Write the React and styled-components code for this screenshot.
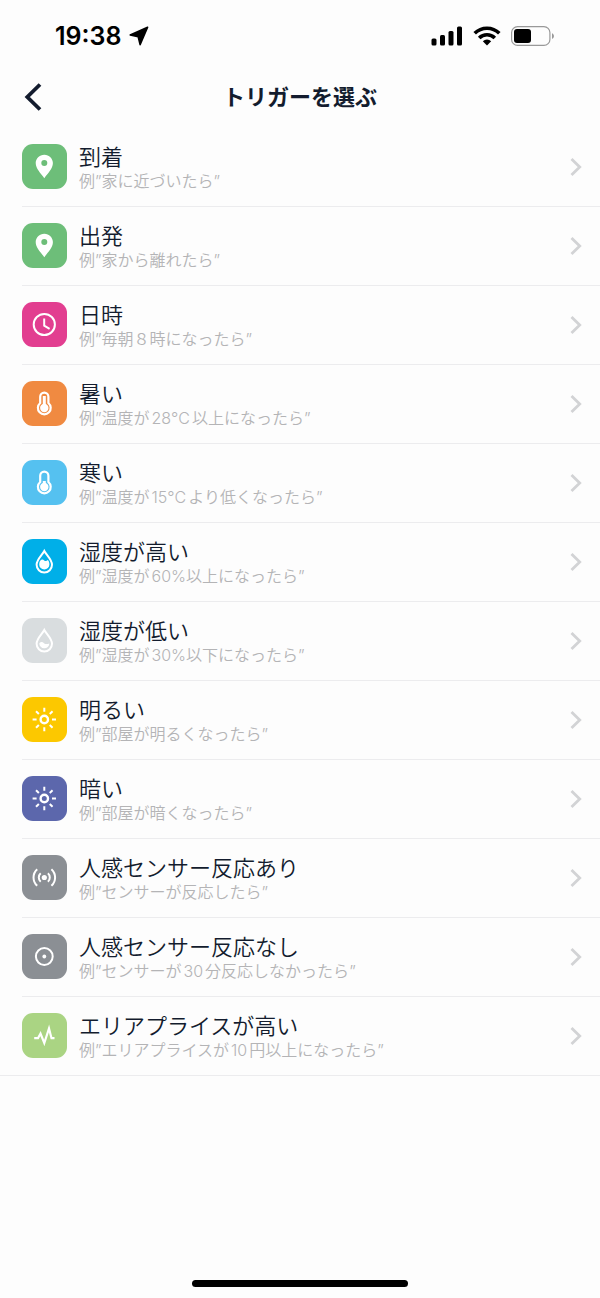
import React from "react";
import styled, { createGlobalStyle } from "styled-components";

const PinIcon = () => (
  <path
    fill="#fff"
    stroke="none"
    fillRule="evenodd"
    d="M22.3 10.7c-4.9 0-8.6 3.8-8.6 8.4 0 5.6 5 10.3 8.6 15.1 3.6-4.8 8.6-9.5 8.6-15.1 0-4.6-3.7-8.4-8.6-8.4zm0 5.4a3 3 0 1 1 0 6 3 3 0 0 1 0-6z"
  />
);

const ClockIcon = () => (
  <>
    <circle cx="22.3" cy="22.5" r="10.6" />
    <path d="M22.2 16.5V23.7L27.6 26.8" />
  </>
);

const ThermometerIcon = ({ level }) => (
  <>
    <path d="M18.2 22V15.8a4.1 4.1 0 0 1 8.2 0V22a6.4 6.4 0 1 1-8.2 0z" strokeWidth="2.2" />
    <circle cx="22.3" cy="27" r="4.2" fill="#fff" stroke="none" />
    <path d={`M22.3 ${level}V26`} strokeWidth="3" />
  </>
);

const DropIcon = ({ water }) => (
  <>
    <path d="M22.3 12C20.4 15.8 14.6 20.6 14.6 25.8a7.7 7.7 0 0 0 15.4 0C30 20.6 24.2 15.8 22.3 12z" />
    <path d={water} fill="#fff" stroke="none" />
  </>
);

const SunIcon = () => (
  <>
    <circle cx="22.3" cy="22.5" r="3.7" strokeWidth="2.4" />
    {[0, 45, 90, 135, 180, 225, 270, 315].map((angle) => (
      <path
        key={angle}
        d="M22.3 10.8V14.8"
        transform={`rotate(${angle} 22.3 22.5)`}
      />
    ))}
  </>
);

const MotionIcon = () => (
  <>
    <circle cx="22.3" cy="22.5" r="2.6" fill="#fff" stroke="none" />
    <path d="M18.7 18.2a5.8 5.8 0 0 0 0 8.6M25.9 18.2a5.8 5.8 0 0 1 0 8.6" />
    <path d="M15.2 14.2a11.2 11.2 0 0 0 0 16.6M29.4 14.2a11.2 11.2 0 0 1 0 16.6" />
  </>
);

const NoMotionIcon = () => (
  <>
    <circle cx="22.3" cy="22.5" r="8.4" />
    <circle cx="22.3" cy="22.5" r="1.9" fill="#fff" stroke="none" />
  </>
);

const PriceIcon = () => (
  <path
    d="M12.2 25.2H16L18.5 20.5L22.3 30L27 15.5L29.5 25.2H32.5"
    strokeWidth="2.2"
  />
);

const triggers = [
  { title: "到着", example: "家に近づいたら", color: "#6dbe79", icon: <PinIcon /> },
  { title: "出発", example: "家から離れたら", color: "#6dbe79", icon: <PinIcon /> },
  { title: "日時", example: "毎朝８時になったら", color: "#e23e90", icon: <ClockIcon /> },
  {
    title: "暑い",
    example: "温度が28°C以上になったら",
    color: "#f08a41",
    icon: <ThermometerIcon level={15} />,
  },
  {
    title: "寒い",
    example: "温度が15°Cより低くなったら",
    color: "#55c1f0",
    icon: <ThermometerIcon level={21} />,
  },
  {
    title: "湿度が高い",
    example: "湿度が60%以上になったら",
    color: "#00afe8",
    icon: (
      <DropIcon water="M18.4 21.6c1.3-1.6 2.7-1.2 3.8-.2s2.3.9 3.7-.3c1 1.2 1.5 2.9 1.5 4.4a5.1 5.1 0 0 1-10.2 0c0-1.3.4-2.9 1.2-3.9z" />
    ),
  },
  {
    title: "湿度が低い",
    example: "湿度が30%以下になったら",
    color: "#d9dddf",
    icon: (
      <DropIcon water="M17.3 25.2c1.7-1.7 3.4-1.2 4.7 0s3 1.1 5.3.2a5 5 0 0 1-10-.2z" />
    ),
  },
  { title: "明るい", example: "部屋が明るくなったら", color: "#fcc800", icon: <SunIcon /> },
  { title: "暗い", example: "部屋が暗くなったら", color: "#5c67ac", icon: <SunIcon /> },
  {
    title: "人感センサー反応あり",
    example: "センサーが反応したら",
    color: "#8b8f94",
    icon: <MotionIcon />,
  },
  {
    title: "人感センサー反応なし",
    example: "センサーが30分反応しなかったら",
    color: "#8b8f94",
    icon: <NoMotionIcon />,
  },
  {
    title: "エリアプライスが高い",
    example: "エリアプライスが10円以上になったら",
    color: "#aad483",
    icon: <PriceIcon />,
  },
];

export default function App() {
  return (
    <>
      <GlobalStyle />
      <Screen>
        <StatusBar>
          <StatusGroup $gap={8}>
            <Time>19:38</Time>
            <svg width="20" height="20" viewBox="0 0 20 20" aria-hidden="true">
              <path
                d="M18.6 1.2 1.2 8.9 9.2 10.8 11.1 18.6z"
                fill="#000"
                stroke="#000"
                strokeWidth="1.6"
                strokeLinejoin="round"
              />
            </svg>
          </StatusGroup>
          <StatusGroup $gap={10}>
            <svg width="32" height="20" viewBox="0 0 32 20" aria-hidden="true">
              <rect x="0.5" y="12.5" width="5" height="7" rx="1.5" />
              <rect x="9" y="9" width="5" height="10.5" rx="1.5" />
              <rect x="17.5" y="5" width="5" height="14.5" rx="1.5" />
              <rect x="26" y="0.5" width="5" height="19" rx="1.5" />
            </svg>
            <svg width="28" height="20" viewBox="0 0 28 20" aria-hidden="true">
              <g fill="none" stroke="#000" strokeWidth="3.6">
                <path d="M1.7 7.3a17.4 17.4 0 0 1 24.6 0" />
                <path d="M6.2 12a11 11 0 0 1 15.6 0" />
              </g>
              <path d="M14 19.6 9.8 15.3a6 6 0 0 1 8.4 0z" />
            </svg>
            <svg width="44" height="20" viewBox="0 0 44 20" aria-hidden="true">
              <rect
                x="0.6"
                y="0.6"
                width="38.3"
                height="18.8"
                rx="6"
                fill="none"
                stroke="#999"
                strokeWidth="1.2"
              />
              <rect x="3" y="3" width="17" height="14" rx="3" />
              <path d="M41 7.2c2.6.9 2.6 4.7 0 5.6z" fill="#999" />
            </svg>
          </StatusGroup>
        </StatusBar>

        <Header>
          <BackButton type="button" aria-label="戻る">
            <svg width="18" height="28" viewBox="0 0 18 28" aria-hidden="true">
              <path
                d="M16 1.5 3.3 14 16 26.5"
                fill="none"
                stroke="#131c2e"
                strokeWidth="3.8"
              />
            </svg>
          </BackButton>
          <PageTitle>トリガーを選ぶ</PageTitle>
        </Header>

        <TriggerList>
          {triggers.map((trigger) => (
            <TriggerItem key={trigger.title}>
              <TriggerButton type="button">
                <IconTile $color={trigger.color} viewBox="0 0 45 45" aria-hidden="true">
                  {trigger.icon}
                </IconTile>
                <TriggerText>
                  <TriggerTitle>{trigger.title}</TriggerTitle>
                  <TriggerExample>例”{trigger.example}”</TriggerExample>
                </TriggerText>
                <svg width="12" height="20" viewBox="0 0 12 20" aria-hidden="true">
                  <path
                    d="M1.5 2 9.7 10 1.5 18"
                    fill="none"
                    stroke="#d2d3d5"
                    strokeWidth="2.8"
                  />
                </svg>
              </TriggerButton>
            </TriggerItem>
          ))}
        </TriggerList>

        <HomeIndicator />
      </Screen>
    </>
  );
}

const GlobalStyle = createGlobalStyle`
  * {
    box-sizing: border-box;
  }
  body {
    margin: 0;
    background: #fdfdfd;
    font-family: Inter, "Noto Sans CJK JP", sans-serif;
  }
`;

const Screen = styled.main`
  display: flex;
  flex-direction: column;
  min-height: 100vh;
`;

const StatusBar = styled.div`
  display: flex;
  align-items: center;
  justify-content: space-between;
  height: 72px;
  padding: 0 45px 0 55px;
`;

const StatusGroup = styled.div`
  display: flex;
  align-items: center;
  gap: ${({ $gap }) => $gap}px;
`;

const Time = styled.span`
  color: #000;
  font-size: 25px;
  font-weight: 600;
`;

const Header = styled.header`
  display: grid;
  grid-template-columns: 60px 1fr 60px;
  align-items: center;
  height: 50px;
  margin-bottom: 6px;
`;

const BackButton = styled.button`
  display: flex;
  align-items: center;
  height: 50px;
  padding: 0 0 0 24px;
  border: 0;
  background: none;
  cursor: pointer;
`;

const PageTitle = styled.h1`
  margin: 0;
  color: #131c2e;
  font-size: 22px;
  font-weight: 600;
  line-height: 32px;
  text-align: center;
`;

const TriggerList = styled.ul`
  margin: 0;
  padding: 0;
  border-bottom: 1px solid #ececee;
  list-style: none;
`;

const TriggerItem = styled.li`
  margin-left: 22px;

  & + & {
    border-top: 1px solid #ececee;
  }
`;

const TriggerButton = styled.button`
  display: flex;
  align-items: center;
  gap: 12px;
  width: 100%;
  height: 78px;
  padding: 0 18px 0 0;
  border: 0;
  background: none;
  font-family: inherit;
  text-align: left;
  cursor: pointer;
`;

const IconTile = styled.svg`
  flex: none;
  width: 45px;
  height: 45px;
  margin-bottom: 2px;
  border-radius: 11px;
  background: ${({ $color }) => $color};
  fill: none;
  stroke: #fff;
  stroke-width: 2;
`;

const TriggerText = styled.span`
  display: flex;
  flex: 1;
  flex-direction: column;
  padding-top: 2px;
`;

const TriggerTitle = styled.span`
  color: #131c2e;
  font-size: 22px;
  font-weight: 350;
  line-height: 26px;
`;

const TriggerExample = styled.span`
  color: #b4b4b6;
  font-size: 16px;
  font-weight: 350;
  line-height: 22px;
  text-autospace: normal;
`;

const HomeIndicator = styled.div`
  width: 36%;
  height: 7px;
  margin: auto auto 11px;
  border-radius: 4px;
  background: #000;
`;
